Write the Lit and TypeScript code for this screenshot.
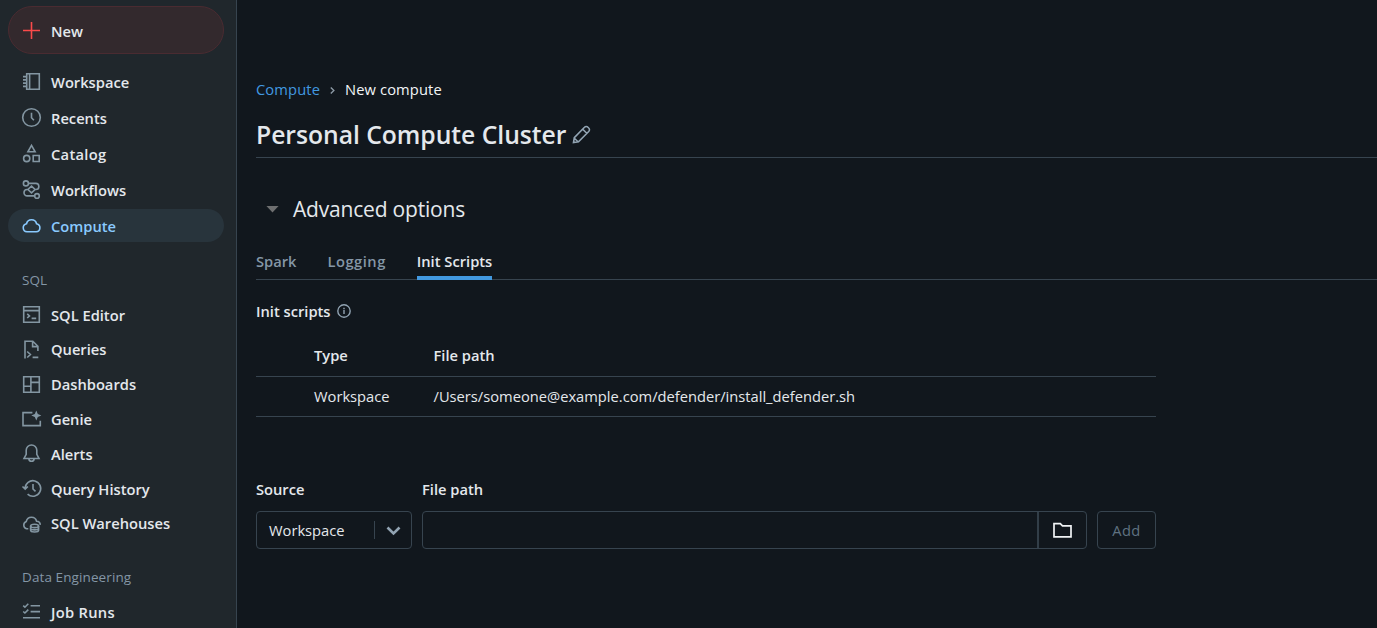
import { LitElement, html, css, svg, nothing } from "lit";
import { customElement, property } from "lit/decorators.js";

const icons: Record<string, unknown> = {
  plus: svg`<path d="M9.5 1v17M1 9.5h17" />`,
  notebook: svg`<path d="M4.7 1.7h12.6v15.6H4.7zM7.6 1.7v15.6M1 4.6h3.5M1 7.9h3.5M1 11.1h3.5M1 14.4h3.5" />`,
  clock: svg`<circle cx="9.5" cy="9.5" r="8.8" /><path d="M9.5 4.8v5l2.4 2.5" />`,
  shapes: svg`<path d="M9.5 1.4l3.6 6.4H5.9zM11.2 11.5h6v6h-6z" /><circle cx="4.7" cy="14.5" r="3.1" />`,
  flow: svg`<circle cx="3.9" cy="3.4" r="2.5" /><circle cx="15" cy="15.9" r="2.3" /><path d="M6.5 3.4h7.3a3 3 0 0 1 0 6.1h-.9M12.6 15.9H5.2a3.2 3.2 0 0 1 0-6.4h.9M9.5 6.1l3.6 3.4-3.6 3.4-3.6-3.4z" />`,
  cloud: svg`<path d="M5 15.8a4.1 4.1 0 0 1-.5-8.1 5.2 5.2 0 0 1 10.1 0 4.1 4.1 0 0 1-.4 8.1z" />`,
  editor: svg`<path d="M1.7 1.7h15.6v15.6H1.7zM1.7 5.6h15.6M5.2 8.8l2.3 2.1-2.3 2.1M9.6 13.4h4.6" />`,
  query: svg`<path d="M3 18.4V1.2h7.8l5.1 5.1v4.6M10.6 1.4v5.2h5.3M5.2 11.5l3.2 3-3.2 3M10.6 17.4h5.7" />`,
  dashboard: svg`<path d="M1.7 1.7h15.6v15.6H1.7zM8.9 1.7v15.6M1.7 11.3h7.2M8.9 7.4h8.4" />`,
  genie: svg`<path d="M10.4 2.6H1v13h17.3v-4.8" /><path class="solid" d="M14.3.6l1.5 3.5 3.5 1.5-3.5 1.5-1.5 3.500-1.500-3.500-3.500-1.500 3.500-1.500z" />`,
  bell: svg`<path d="M9.5 1a5.3 5.3 0 0 0-5.3 5.3v4L2 14.5h15l-2.2-4.2v-4A5.3 5.3 0 0 0 9.5 1zM6.900 14.700a2.600 2.600 0 0 0 5.200 0" />`,
  history: svg`<path d="M3.100 9.500a7.800 7.800 0 1 1 2.500 5.700M.5 7.500l2.700 2.700 2.700-2.700M11 5v5l2.500 2.300" />`,
  warehouse: svg`<path d="M6.300 14.800H4.600a3.900 3.900 0 0 1-.3-7.400 5.300 5.300 0 0 1 10.300-.2 3.900 3.900 0 0 1 3.700 3.700" /><ellipse cx="12.600" cy="11.900" rx="4" ry="1.700" /><path d="M8.600 11.900v4.300c0 2.300 8 2.300 8 0v-4.300M8.600 14.200c0 2.200 8 2.200 8 0" />`,
  checks: svg`<path d="M8.600 3.800H18M8.600 9.600H18M1 15.700h17M1.200 3.700l1.700 1.500L6.300 1.800M1.200 9.500l1.700 1.500 3.400-3.400" />`,
  pencil: svg`<path d="M1.500 17.500l.8-4.900L12.500 2.300a2.400 2.400 0 0 1 3.500 0l.7.7a2.400 2.400 0 0 1 0 3.500L6.500 16.700zM10.700 4.200l4.100 4.100M2.100 13l3.900 3.800" />`,
  info: svg`<circle cx="9.500" cy="9.500" r="8.400" /><path d="M9.500 8.300v5.400M9.500 5v2" />`,
  folder: svg`<path d="M1 2.700h6.300l2.200 2.200h8.500v11H1z" />`,
  right: svg`<path d="M7 5l4.500 4.500L7 14" />`,
  down: svg`<path d="M3.500 6.500l6 6 6-6" />`,
};

@customElement("ui-icon")
class UiIcon extends LitElement {
  @property() name = "";
  static styles = css`
    :host { display: block; width: 19px; height: 19px; flex: none; }
    svg { display: block; width: 100%; height: 100%; overflow: visible; fill: none; stroke: currentColor; stroke-width: var(--stroke, 1.6); }
    .solid { fill: currentColor; stroke: none; }
  `;
  render() {
    return html`<svg viewBox="0 0 19 19" aria-hidden="true">${icons[this.name] ?? nothing}</svg>`;
  }
}

@customElement("app-root")
class AppRoot extends LitElement {
  static styles = css`
    :host { display: flex; height: 628px; overflow: hidden; background: #11171d; color: #e4e8ec; font: 14.7px/20px "Open Sans", "Noto Sans", sans-serif; }
    * { box-sizing: border-box; }
    .side { width: 237px; flex: none; background: #20272c; border-right: 1px solid #37444f; padding: 6px 12px 0 8px; display: flex; flex-direction: column; }
    .item { display: flex; align-items: center; gap: 10px; padding-left: 14px; border-radius: 24px; font-weight: 600; flex: none; }
    .item ui-icon { color: #8396a2; }
    .new { height: 48px; background: #33292d; border: 1px solid #4a2b31; padding-left: 13px; margin-bottom: 11px; }
    .new span { padding-top: 1px; }
    .new ui-icon { color: #fb4a4a; }
    .g1 { display: grid; grid-auto-rows: 33px; gap: 3px; }
    .g2 { display: grid; grid-auto-rows: 34.8px; }
    .active { background: #28343c; color: #8acaff; }
    .active ui-icon { color: #8acaff; }
    .label { padding-left: 14px; font-size: 13.5px; letter-spacing: 0.1px; color: #8496a6; }
    .l1 { margin: 28px 0 7.3px; }
    .l2 { margin: 25.7px 0 8px; }
    .wide { letter-spacing: 0.3px; }
    .main { flex: 1; min-width: 0; padding: 79px 0 0 19px; }
    .crumbs { display: flex; align-items: center; height: 20px; color: #f2f5f7; letter-spacing: 0.12px; }
    .link { color: #4299e0; }
    .crumbs ui-icon { width: 13px; height: 13px; margin: 2px 6px 0; color: #8d9aa6; --stroke: 2; }
    .title { display: flex; align-items: center; gap: 6px; height: 59px; padding-top: 13px; border-bottom: 1px solid #37444f; }
    h1 { margin: 0; font-size: 24.7px; line-height: 36px; font-weight: 600; letter-spacing: -0.03px; }
    .title ui-icon { color: #92a4b3; }
    .adv { display: flex; align-items: center; height: 30px; margin-top: 36px; padding-left: 10px; gap: 14px; font-size: 21px; letter-spacing: -0.19px; }
    .caret { width: 13px; height: 7px; background: #6e6f70; clip-path: polygon(0 0, 100% 0, 50% 100%); }
    .tabs { display: flex; gap: 31px; height: 36px; margin-top: 20px; border-bottom: 1px solid #37444f; font-weight: 600; color: #8496a6; }
    .tab { height: 36px; padding-top: 7px; }
    .logging { letter-spacing: 0.5px; }
    .on { color: #e4e8ec; border-bottom: 4px solid #4299e0; }
    .heading { display: flex; align-items: center; gap: 6px; margin-top: 21px; font-weight: 600; height: 20px; }
    .heading ui-icon { width: 14px; height: 14px; color: #92a4b3; --stroke: 1.9; }
    .row { width: 900px; height: 40px; display: grid; grid-template-columns: 119.5px 1fr; align-items: center; padding: 0 0 2px 58px; border-bottom: 1px solid #37444f; }
    .head { margin-top: 16px; font-weight: 600; padding-bottom: 3px; }
    .form { display: grid; grid-template-columns: 156px 665px 59px; column-gap: 10px; width: 900px; margin-top: 62px; }
    .flabel { font-weight: 600; height: 32px; }
    .box { height: 38px; border: 1px solid #37444f; border-radius: 4px; display: flex; align-items: center; }
    .select { padding-left: 12px; }
    .select ui-icon { color: #92a4b3; --stroke: 2.6; margin: 0 8px 0 9px; }
    .sep { width: 1px; height: 18px; background: #37444f; margin-left: auto; }
    .browse { margin-left: auto; width: 49px; height: 100%; border-left: 2px solid #323e48; display: grid; place-items: center; }
    .browse ui-icon { --stroke: 1.7; color: #f0f3f5; }
    .add { justify-content: center; color: #5f7281; letter-spacing: 0.4px; }
  `;
  item(icon: string, text: string, cls = "") {
    return html`<div class="item ${cls}"><ui-icon name=${icon}></ui-icon><span>${text}</span></div>`;
  }
  render() {
    return html`
      <nav class="side">
        ${this.item("plus", "New", "new")}
        <div class="g1">
          ${this.item("notebook", "Workspace")}${this.item("clock", "Recents")}${this.item("shapes", "Catalog", "wide")}${this.item("flow", "Workflows")}${this.item("cloud", "Compute", "active")}
        </div>
        <div class="label l1"><span>SQL</span></div>
        <div class="g2">
          ${this.item("editor", "SQL Editor")}${this.item("query", "Queries")}${this.item("dashboard", "Dashboards")}${this.item("genie", "Genie")}${this.item("bell", "Alerts")}${this.item("history", "Query History")}${this.item("warehouse", "SQL Warehouses")}
        </div>
        <div class="label l2"><span>Data Engineering</span></div>
        <div class="g2">${this.item("checks", "Job Runs", "wide")}</div>
      </nav>
      <main class="main">
        <div class="crumbs"><span class="link">Compute</span><ui-icon name="right"></ui-icon><span>New compute</span></div>
        <div class="title"><h1>Personal Compute Cluster</h1><ui-icon name="pencil"></ui-icon></div>
        <div class="adv"><div class="caret"></div><span>Advanced options</span></div>
        <div class="tabs"><div class="tab">Spark</div><div class="tab logging">Logging</div><div class="tab on">Init Scripts</div></div>
        <div class="heading"><span>Init scripts</span><ui-icon name="info"></ui-icon></div>
        <div class="row head"><div>Type</div><div>File path</div></div>
        <div class="row"><div>Workspace</div><div>/Users/someone@example.com/defender/install_defender.sh</div></div>
        <div class="form">
          <div class="flabel">Source</div><div class="flabel">File path</div><div></div>
          <div class="box select"><span>Workspace</span><div class="sep"></div><ui-icon name="down"></ui-icon></div>
          <div class="box"><div class="browse"><ui-icon name="folder"></ui-icon></div></div>
          <div class="box add"><span>Add</span></div>
        </div>
      </main>
    `;
  }
}
